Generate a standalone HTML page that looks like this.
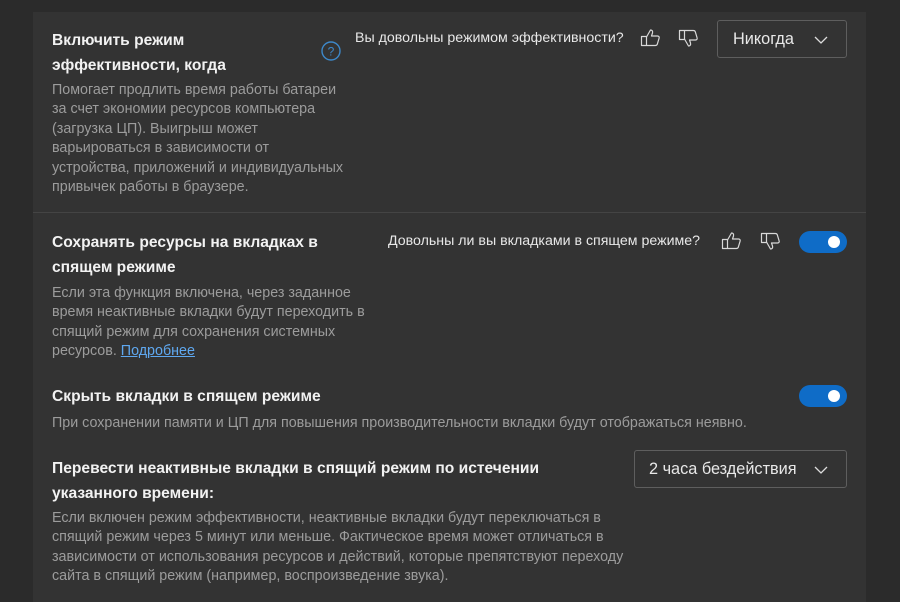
<!DOCTYPE html>
<html><head><meta charset="utf-8"><style>
html,body{margin:0;padding:0;width:900px;height:602px;overflow:hidden;background:#2b2b2b;font-family:"Segoe UI","Liberation Sans","DejaVu Sans",sans-serif;}
.card{position:absolute;left:33px;top:12px;width:833px;height:590px;background:#333333;}
.a{position:absolute;white-space:nowrap;}
.t{color:#f2f2f2;font-size:15.6px;font-weight:bold;line-height:24.5px;}
.d{color:#9c9c9c;font-size:14.3px;line-height:19.4px;}
.q{color:#e8e8e8;font-size:14.2px;}
.dd{position:absolute;border:1px solid #5e5e5e;border-radius:3px;color:#e8e8e8;font-size:16.3px;box-sizing:border-box;}
.tg{position:absolute;width:48px;height:22px;border-radius:11px;background:#0f6cc7;}
.tg::after{content:"";position:absolute;right:7px;top:5px;width:12px;height:12px;border-radius:50%;background:#fff;}
a{color:#5fa8f0;text-decoration:underline;}
</style></head><body>
<div class="card"></div>
<div style="position:absolute;left:33px;top:212px;width:833px;height:1px;background:#444"></div>

<div class="a t" style="left:52px;top:29px">Включить режим<br>эффективности, когда</div>
<div class="a d" style="left:52px;top:81px">Помогает продлить время работы батареи<br>за счет экономии ресурсов компьютера<br>(загрузка ЦП). Выигрыш может<br>варьироваться в зависимости от<br>устройства, приложений и индивидуальных<br>привычек работы в браузере.</div>
<svg class="a" style="left:320px;top:40px" width="22" height="22" viewBox="0 0 22 22"><circle cx="11" cy="11" r="9" fill="none" stroke="#3d88c9" stroke-width="1.4"/><text x="11" y="15.5" text-anchor="middle" font-size="12" fill="#3d88c9" font-family="Liberation Sans">?</text></svg>
<div class="a q" style="left:355px;top:30px">Вы довольны режимом эффективности?</div>

<svg class="a" style="left:640px;top:28px" width="22" height="20" viewBox="0 0 22 20"><path d="M1.5 8.5h5v9h-5z M6.5 9l4-7c1.5 0 2.5 1 2 3l-1 3h6c1.3 0 2 1 1.6 2.2l-1.8 6c-.3.9-1 1.3-2 1.3H6.5" fill="none" stroke="#d8d8d8" stroke-width="1.2" stroke-linejoin="round"/></svg>
<svg class="a" style="left:678px;top:28px" width="22" height="20" viewBox="0 0 22 20"><g transform="scale(1,-1) translate(0,-20)"><path d="M1.5 8.5h5v9h-5z M6.5 9l4-7c1.5 0 2.5 1 2 3l-1 3h6c1.3 0 2 1 1.6 2.2l-1.8 6c-.3.9-1 1.3-2 1.3H6.5" fill="none" stroke="#d8d8d8" stroke-width="1.2" stroke-linejoin="round"/></g></svg>
<div class="dd" style="left:717px;top:20px;width:130px;height:38px"><span class="a" style="left:15px;top:9px">Никогда</span><svg class="a" style="left:96px;top:15px" width="14" height="9" viewBox="0 0 14 9"><path d="M1 1l6 6 6-6" fill="none" stroke="#ddd" stroke-width="1.3"/></svg></div>

<div class="a t" style="left:52px;top:231px">Сохранять ресурсы на вкладках в<br>спящем режиме</div>
<div class="a d" style="left:52px;top:284px">Если эта функция включена, через заданное<br>время неактивные вкладки будут переходить в<br>спящий режим для сохранения системных<br>ресурсов. <a>Подробнее</a></div>
<div class="a q" style="left:388px;top:233px">Довольны ли вы вкладками в спящем режиме?</div>
<svg class="a" style="left:721px;top:231px" width="22" height="20" viewBox="0 0 22 20"><path d="M1.5 8.5h5v9h-5z M6.5 9l4-7c1.5 0 2.5 1 2 3l-1 3h6c1.3 0 2 1 1.6 2.2l-1.8 6c-.3.9-1 1.3-2 1.3H6.5" fill="none" stroke="#d8d8d8" stroke-width="1.2" stroke-linejoin="round"/></svg>
<svg class="a" style="left:760px;top:231px" width="22" height="20" viewBox="0 0 22 20"><g transform="scale(1,-1) translate(0,-20)"><path d="M1.5 8.5h5v9h-5z M6.5 9l4-7c1.5 0 2.5 1 2 3l-1 3h6c1.3 0 2 1 1.6 2.2l-1.8 6c-.3.9-1 1.3-2 1.3H6.5" fill="none" stroke="#d8d8d8" stroke-width="1.2" stroke-linejoin="round"/></g></svg>
<div class="tg" style="left:799px;top:231px"></div>

<div class="a t" style="left:52px;top:385px">Скрыть вкладки в спящем режиме</div>
<div class="a d" style="left:52px;top:414px">При сохранении памяти и ЦП для повышения производительности вкладки будут отображаться неявно.</div>
<div class="tg" style="left:799px;top:385px"></div>

<div class="a t" style="left:52px;top:457px">Перевести неактивные вкладки в спящий режим по истечении<br>указанного времени:</div>
<div class="a d" style="left:52px;top:509px">Если включен режим эффективности, неактивные вкладки будут переключаться в<br>спящий режим через 5 минут или меньше. Фактическое время может отличаться в<br>зависимости от использования ресурсов и действий, которые препятствуют переходу<br>сайта в спящий режим (например, воспроизведение звука).</div>
<div class="dd" style="left:634px;top:450px;width:213px;height:38px"><span class="a" style="left:14px;top:9px">2 часа бездействия</span><svg class="a" style="left:179px;top:15px" width="14" height="9" viewBox="0 0 14 9"><path d="M1 1l6 6 6-6" fill="none" stroke="#ddd" stroke-width="1.3"/></svg></div>
</body></html>
